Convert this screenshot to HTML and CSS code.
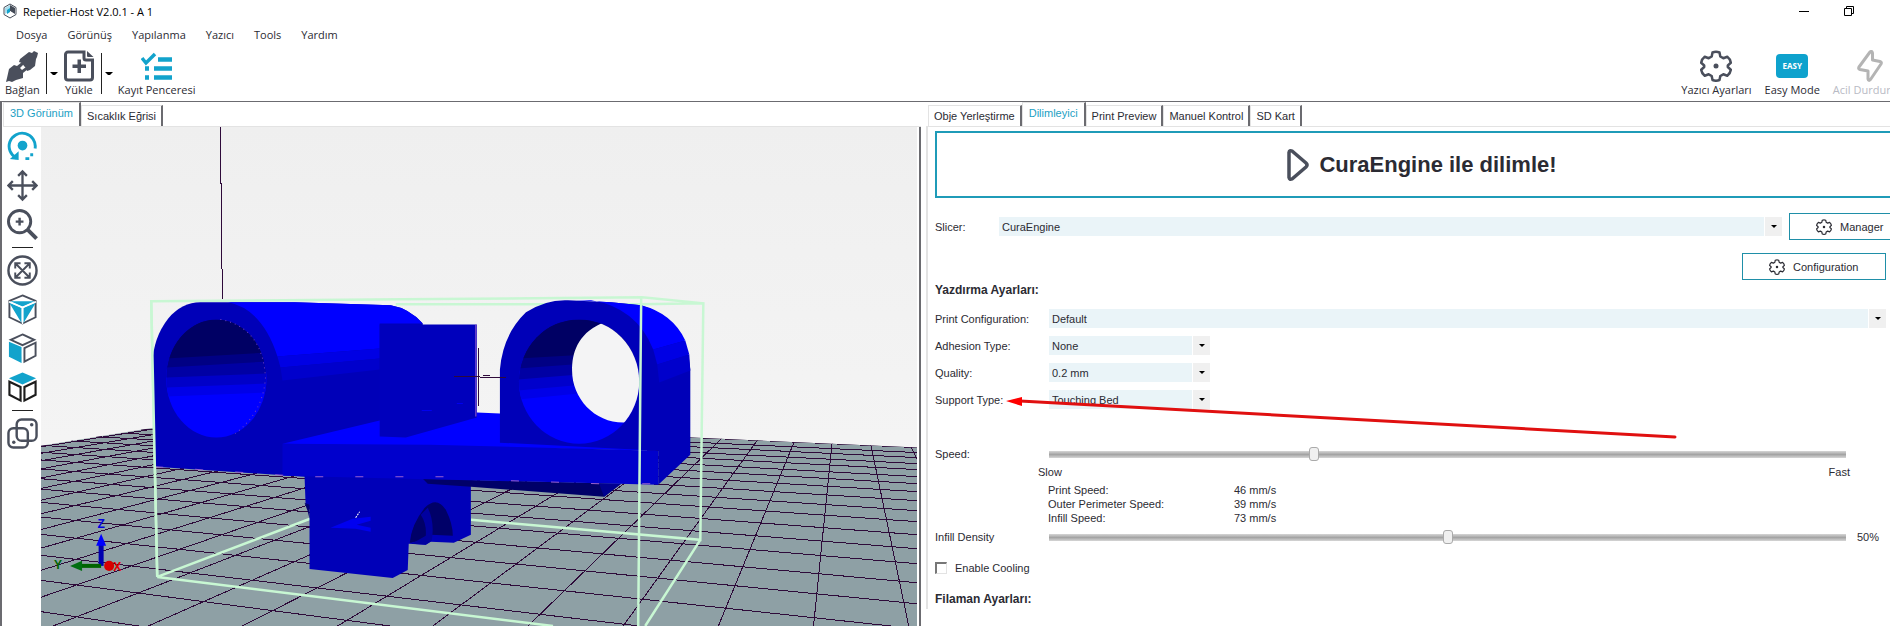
FILE: index.html
```
<!DOCTYPE html>
<html lang="tr">
<head>
  <meta charset="UTF-8" />
  <meta name="viewport" content="width=device-width, initial-scale=1.0"/>
  <title>Repetier-Host V2.0.1 - A 1</title>
  <link rel="stylesheet" href="styles.css">
</head>
<body>

  <svg class="defs" width="0" height="0" aria-hidden="true">
    <symbol id="gear" viewBox="0 0 32 32">
      <path d="M12.5 2.500q3.500-1.500 7 0l.8 4 3 1.700 4-1.400q3 2.200 3.500 6l-3 2.700v1.500l3 2.700q-.5 3.800-3.500 6l-4-1.400-3 1.700-.8 4q-3.500 1.500-7 0l-.8-4-3-1.700-4 1.400q-3-2.200-3.500-6l3-2.700v-1.500l-3-2.700q.5-3.800 3.500-6l4 1.400 3-1.700z" fill="none" stroke="currentColor" stroke-linejoin="round"/>
      <circle cx="16" cy="16" r="2.500" fill="currentColor"/>
    </symbol>
  </svg>

  <header class="titlebar">
    <svg class="logo" viewBox="0 0 16 16">
      <path d="M8 1l6 3.500v7L8 15l-6-3.500v-7z" fill="#fff" stroke="#444b57" stroke-width="1"/>
      <path d="M8 2v6l-5 3V5z" fill="#a8dcec"/>
      <path d="M8 2v6l5 3V5z" fill="#444b57"/>
      <path d="M8 8l4 3-4 2-4-2z" fill="#fff"/>
      <path d="M8 5v4l-3 2V7z" fill="#12a3cc"/>
    </svg>
    <span class="title">Repetier-Host V2.0.1 - A 1</span>
    <div class="window-buttons">
      <button aria-label="Minimize"><svg viewBox="0 0 10 10"><path d="M0 5.500h10" stroke="#000"/></svg></button>
      <button aria-label="Restore"><svg viewBox="0 0 10 10"><path d="M.5 2.500h7v7h-7zM2.500 2.500v-2h7v7h-2" fill="none" stroke="#000"/></svg></button>
    </div>
  </header>

  <nav class="menu">
    <a href="#">Dosya</a>
    <a href="#">Görünüş</a>
    <a href="#">Yapılanma</a>
    <a href="#">Yazıcı</a>
    <a href="#">Tools</a>
    <a href="#">Yardım</a>
  </nav>

  <div class="toolbar">
    <button class="tool">
      <svg viewBox="0 0 32 32">
        <g fill="#4a4f5c">
          <path d="M14 9l9-7 3 1 2-2 4 2-1 4-1 2-1 7-5 4-3 1-1-3-2-2-2-3-3-1z"/>
          <path d="M3 19l5-4 3 1 5-4 2 2-4 4 2 2 4-3 2 2-5 4v5l-7 2-4 2-3-1-3 1 1-4z"/>
        </g>
      </svg>
      Bağlan
    </button>
    <button class="drop" aria-label="Bağlan seçenekleri"></button>
    <button class="tool">
      <svg viewBox="0 0 32 32">
        <path d="M21 2H5a2.500 2.500 0 0 0-2.500 2.500v23A2.500 2.500 0 0 0 5 30h22a2.500 2.500 0 0 0 2.500-2.500V10h-6.500a2 2 0 0 1-2-2z" fill="none" stroke="#4a4f5c" stroke-width="3"/>
        <path d="M24 1l6.500 6H25a1 1 0 0 1-1-1zM14.500 9.500h3.500v5h5V18h-5v5h-3.500v-5h-5v-3.500h5z" fill="#4a4f5c"/>
      </svg>
      Yükle
    </button>
    <button class="drop" aria-label="Yükle seçenekleri"></button>
    <button class="tool">
      <svg viewBox="0 0 32 32">
        <path d="M1 8l4 5 9-9" fill="none" stroke="#12a3cc" stroke-width="3.500"/>
        <path d="M17 9.500h14M13 18.500h18M13 27.500h18M4 18.500h4M4 27.500h4" stroke="#12a3cc" stroke-width="4.500"/>
      </svg>
      Kayıt Penceresi
    </button>
    <div class="toolbar-right">
      <button class="tool">
        <svg class="gear-big" viewBox="0 0 32 32"><use href="#gear"/></svg>
        Yazıcı Ayarları
      </button>
      <button class="tool">
        <span class="easy">EASY</span>
        Easy Mode
      </button>
      <button class="tool" disabled>
        <svg viewBox="0 0 32 32">
          <path d="M16 2L5 17q-1 2 1 2.500l8 1.500v8q.5 2.500 2.500.5L27 14q1-2-1-2.500L18.500 10V3q-.5-2.500-2.500-1z" fill="none" stroke="#b4b4b4" stroke-width="3" stroke-linejoin="round"/>
        </svg>
        Acil Durdurma
      </button>
    </div>
  </div>

  <main class="workspace">

    <section class="left-pane">
      <div class="tabs">
        <button class="tab active">3D Görünüm</button>
        <button class="tab">Sıcaklık Eğrisi</button>
      </div>
      <div class="view">
        <div class="view-tools">
          <button aria-label="Rotate">
            <svg viewBox="0 0 32 32">
              <path d="M10 28A13.500 13.500 0 1 1 29 18" fill="none" stroke="#12a3cc" stroke-width="3"/>
              <circle cx="16" cy="15" r="5" fill="#12a3cc"/>
              <path d="M3 29l9 1V21zM19 27h4v3h-4zM24 23h3v3h-3z" fill="#12a3cc"/>
            </svg>
          </button>
          <button aria-label="Move">
            <svg viewBox="0 0 32 32"><path d="M16 1v30M1 16h30M11.500 6L16 1.500 20.500 6M11.500 26l4.500 4.500 4.500-4.500M6 11.500L1.500 16 6 20.500M26 11.500l4.500 4.500-4.500 4.500" fill="none" stroke="#4a4f5c" stroke-width="2.400"/></svg>
          </button>
          <button aria-label="Zoom">
            <svg viewBox="0 0 32 32"><circle cx="13" cy="13" r="11.500" fill="none" stroke="#4a4f5c" stroke-width="3"/><path d="M13 9v8M9 13h8" stroke="#4a4f5c" stroke-width="2.500"/><path d="M21.500 21.500l9 9" stroke="#4a4f5c" stroke-width="4"/></svg>
          </button>
          <hr>
          <button aria-label="Fit">
            <svg viewBox="0 0 32 32"><circle cx="16" cy="16" r="14.500" fill="none" stroke="#4a4f5c" stroke-width="2.500"/><path d="M9 9l14 14M23 9L9 23M8.500 14V8.500H14M18 8.500h5.500V14M23.500 18v5.500H18M14 23.500H8.500V18" fill="none" stroke="#4a4f5c" stroke-width="2"/></svg>
          </button>
          <button aria-label="Isometric view">
            <svg viewBox="0 0 32 32">
              <path d="M16 1.500L29.500 7v17L16 30.500 2.500 24V7z" fill="#fff" stroke="#4a4f5c" stroke-width="2"/>
              <path d="M3.500 7.500h25L16 13z" fill="#12a3cc"/>
              <path d="M2 8.500l13 6V30zM30 8.500l-13 6V30z" fill="#12a3cc"/>
              <path d="M16 13v18M2 8l14 6 14-6" fill="none" stroke="#fff" stroke-width="1.500"/>
            </svg>
          </button>
          <button aria-label="Front view">
            <svg viewBox="0 0 32 32">
              <path d="M16 1.500L28 7l-12 5.500L4 7z" fill="#fff" stroke="#4a4f5c" stroke-width="2"/>
              <path d="M2 9l13 5.500V31L2 24.500z" fill="#12a3cc"/>
              <path d="M29.500 10v13.500L18 29.500V15.500z" fill="#fff" stroke="#4a4f5c" stroke-width="2"/>
            </svg>
          </button>
          <button aria-label="Top view">
            <svg viewBox="0 0 32 32">
              <path d="M16 .5L30 6.500 16 13 2 6.500z" fill="#12a3cc"/>
              <path d="M2.500 10v13.500L14 29.500V15.500zM29.500 10v13.500L18 29.500V15.500z" fill="#fff" stroke="#1c1c1c" stroke-width="2.200"/>
            </svg>
          </button>
          <hr>
          <button aria-label="Parallel projection">
            <svg viewBox="0 0 32 32">
              <rect x="1.500" y="10.500" width="20" height="20" rx="5" fill="none" stroke="#4a4f5c" stroke-width="2.500"/>
              <rect x="10" y="1.500" width="20.500" height="22" rx="5" fill="none" stroke="#4a4f5c" stroke-width="2.500"/>
              <circle cx="25.500" cy="7" r="1.800" fill="#4a4f5c"/><circle cx="7" cy="25" r="1.800" fill="#4a4f5c"/>
            </svg>
          </button>
        </div>

        <svg class="scene" viewBox="41 128 876 498" preserveAspectRatio="xMinYMin slice">
          <defs>
            <clipPath id="floor"><path d="M41 446L223 417 917 448V626H41z"/></clipPath>
            <clipPath id="holeL"><ellipse cx="216" cy="379" rx="50" ry="59"/></clipPath>
            <clipPath id="holeR"><ellipse cx="578" cy="382" rx="60" ry="62"/></clipPath>
            <linearGradient id="sky" x1="0" y1="0" x2="0" y2="1">
              <stop offset="0" stop-color="#efefef"/><stop offset="1" stop-color="#f7f7f7"/>
            </linearGradient>
          </defs>
          <rect x="41" y="128" width="876" height="498" fill="url(#sky)"/>

          <!-- print bed -->
          <g clip-path="url(#floor)">
            <rect x="41" y="400" width="876" height="226" fill="#8ea0a5"/>
            <path class="grid" d="M-1950 320L917 448M-1950 320L917 453M-1950 320L917 458M-1950 320L917 464M-1950 320L917 470M-1950 320L917 477M-1950 320L917 484M-1950 320L917 492M-1950 320L917 501M-1950 320L917 511M-1950 320L917 522M-1950 320L917 535M-1950 320L917 549M-1950 320L917 564M-1950 320L917 583M-1950 320L917 604M-1950 320L917 629M-1950 320L917 659M-1950 320L917 695M-1950 320L917 740"/>
            <path class="grid" d="M-1087 626L843 320M-992 626L843 320M-897 626L843 320M-802 626L843 320M-707 626L843 320M-612 626L843 320M-517 626L843 320M-422 626L843 320M-327 626L843 320M-232 626L843 320M-137 626L843 320M-42 626L843 320M53 626L843 320M148 626L843 320M242 626L843 320M337 626L843 320M432 626L843 320M527 626L843 320M622 626L843 320M717 626L843 320M812 626L843 320M907 626L843 320M1002 626L843 320"/>
          </g>
          <path class="grid" d="M220 128l2 172"/>

          <!-- far edges of the bounding box -->
          <path class="bounds" d="M157 577L151 302 401 300 641 298 702 304 699 540 470 520M702 304L640 305 395 305M157 577L320 515M157 577L552 626M699 540L644 626"/>

          <!-- lower block -->
          <path d="M304 476H470V535L453 543 430 542 425 545 408 544 407 570 392 578 309 569V510L305 503z" fill="#0000b8"/>
          <path d="M304 503l5 2v14l-2-8z" fill="#000070"/>
          <path d="M409 543Q411 524 424 508 436 496 445 510 452 524 452 536L430 535Q432 515 425 511 432 530 425 540z" fill="#000068"/>
          <path d="M427 508Q434 522 431 541L425 545 411 544 425 536Q426 524 420 515z" fill="#0000a0"/>
          <path d="M410 543Q411 528 417 520 424 530 424 536z" fill="#000068"/>
          <path d="M330 528l22-9 18-2v4l-14 4 14 3v4l-15-3z" fill="#0000f0"/>
          <path d="M355 518l4-6" fill="none" stroke="#fff" stroke-dasharray="2 1"/>
          <path d="M422 479L620 484 603 497 470 487 427 484z" fill="#000068"/>
          <path d="M598 484h22l-17 13z" fill="#000090"/>

          <!-- left tube -->
          <path d="M155 467L152 365Q153 338 168 319 182 303 200 303L294 303 390 306Q408 309 422 324V450L305 477z" fill="#0000b8"/>
          <path d="M200 303L294 303 390 306Q408 309 422 324H379V349L277 357Q262 310 228 303z" fill="#0000ff"/>
          <path d="M277 357L379 349V359L280 368z" fill="#0000e4"/>
          <path d="M280 368L379 359V370L282 381z" fill="#0000cc"/>
          <g clip-path="url(#holeL)">
            <path d="M166 320h101v120H166z" fill="#0000ff"/>
            <path d="M166 320h101v73L166 397z" fill="#0000e8"/>
            <path d="M166 320h101v64L166 388z" fill="#0000c8"/>
            <path d="M166 320h101v54L166 378z" fill="#0000a4"/>
            <path d="M166 320h101v42L166 368z" fill="#000084"/>
            <path d="M166 320h101v33L166 359z" fill="#000064"/>
          </g>
          <path d="M220 320Q262 328 265 378 263 412 235 434" fill="none" stroke="#7040c0" stroke-dasharray="1 4"/>

          <!-- plate -->
          <path d="M282 444L379 421 476 413 499 414 657 451z" fill="#0000ff"/>
          <path d="M282 444L430 445 657 451V485L282 476z" fill="#0000cc"/>
          <path d="M379 325H476V418L405 438 379 437z" fill="#0000bc"/>
          <path d="M421 411h10M456 404h6" stroke="#0000f0"/>
          <path class="seam" d="M475 325v92"/>

          <!-- right tube -->
          <path d="M499 443V370Q502 335 525 313 545 300 567 301L610 303 640 306Q686 320 689 370V455L657 485V451L580 447z" fill="#0000b8"/>
          <path d="M575 301L610 303 640 306Q671 314 684 341L652 350Q635 308 590 301z" fill="#0000ff"/>
          <path d="M652 350L684 341 688 355 656 365z" fill="#0000e4"/>
          <path d="M656 365L688 355 689 371 658 383z" fill="#0000cc"/>
          <g clip-path="url(#holeR)">
            <path d="M517 320h122v125H517z" fill="#0000ff"/>
            <path d="M517 320h122v68L517 400z" fill="#0000e8"/>
            <path d="M517 320h122v60L517 391z" fill="#0000cc"/>
            <path d="M517 320h122v50L517 380z" fill="#0000a4"/>
            <path d="M517 320h122v40L517 369z" fill="#000084"/>
            <path d="M517 320h122v32L517 359z" fill="#000064"/>
            <path d="M600 324C576 335 571 354 571 371 571 399 594 424 624 423H645V324z" fill="#f4f4f5"/>
          </g>

          <path class="grid" d="M478 349V406M453 377L505 378M482 376h7"/>
          <path class="seam" d="M155 467L305 477H465M510 481l90 3M641 484h15" stroke-dasharray="8 32"/>
          <path class="bounds" d="M640 298L639 400 637 626M151 302L157 577"/>

          <!-- axis marker -->
          <path d="M101 542v24" stroke="#0000b0" stroke-width="5"/>
          <path d="M101 534l5 12H96z" fill="#0000ff"/>
          <path d="M80 566h21" stroke="#006400" stroke-width="4"/>
          <path d="M70 566l12-5v10z" fill="#006e10"/>
          <circle cx="109" cy="566" r="5" fill="#d80000"/>
          <text class="axis" x="101" y="528" fill="#0000e0">Z</text>
          <text class="axis" x="58" y="569" fill="#006400">Y</text>
          <text class="axis" x="117" y="571" fill="#e00000">X</text>
        </svg>
      </div>
    </section>

    <section class="right-pane">
      <div class="tabs">
        <button class="tab">Obje Yerleştirme</button>
        <button class="tab active">Dilimleyici</button>
        <button class="tab">Print Preview</button>
        <button class="tab">Manuel Kontrol</button>
        <button class="tab">SD Kart</button>
      </div>

      <form class="slicer">
        <button type="button" class="slice-button">
          <svg viewBox="0 0 24 34"><path d="M3 4.500v25q.5 2.500 3 1.500L20 19q2-2 0-4L6 3Q3.500 2 3 4.500z" fill="none" stroke="#4a4f5c" stroke-width="3.500"/></svg>
          CuraEngine ile dilimle!
        </button>

        <div class="row slicer-row">
          <label for="slicer">Slicer:</label>
          <span class="combo"><select id="slicer"><option>CuraEngine</option></select></span>
          <button type="button" class="outline"><svg viewBox="0 0 32 32"><use href="#gear"/></svg>Manager</button>
        </div>
        <div class="row config-row">
          <button type="button" class="outline"><svg viewBox="0 0 32 32"><use href="#gear"/></svg>Configuration</button>
        </div>

        <h2>Yazdırma Ayarları:</h2>
        <div class="fields">
          <label for="config">Print Configuration:</label>
          <span class="combo"><select id="config"><option>Default</option></select></span>
          <label for="adhesion">Adhesion Type:</label>
          <span class="combo short"><select id="adhesion"><option>None</option></select></span>
          <label for="quality">Quality:</label>
          <span class="combo short"><select id="quality"><option>0.2 mm</option></select></span>
          <label for="support">Support Type:</label>
          <span class="combo short"><select id="support"><option>Touching Bed</option></select></span>
        </div>

        <div class="slider-row">
          <label for="speed">Speed:</label>
          <input type="range" id="speed" min="0" max="100" value="33">
        </div>
        <div class="scale"><span>Slow</span><span>Fast</span></div>
        <dl class="speeds">
          <dt>Print Speed:</dt><dd>46 mm/s</dd>
          <dt>Outer Perimeter Speed:</dt><dd>39 mm/s</dd>
          <dt>Infill Speed:</dt><dd>73 mm/s</dd>
        </dl>
        <div class="slider-row">
          <label for="infill">Infill Density</label>
          <input type="range" id="infill" min="0" max="100" value="50">
          <output for="infill">50%</output>
        </div>

        <div class="check">
          <input type="checkbox" id="cooling">
          <label for="cooling">Enable Cooling</label>
        </div>
        <h2>Filaman Ayarları:</h2>
      </form>

      <svg class="pointer" width="680" height="50" viewBox="0 0 680 50">
        <path d="M14 11L669 47" stroke="#e01010" stroke-width="3" stroke-linecap="round"/>
        <path d="M0 11L16 7v9z" fill="#f00"/>
      </svg>
    </section>

  </main>

</body>
</html>
```
FILE: styles.css
```
* {
  box-sizing: border-box;
}

body {
  margin: 0;
  height: 100vh;
  display: flex;
  flex-direction: column;
  overflow: hidden;
  background: #fff;
  color: #2b2b33;
  font-family: "Open Sans", "Noto Sans", sans-serif;
  font-size: 11px;
}

button {
  padding: 0;
  border: none;
  background: none;
  color: inherit;
  font: inherit;
  white-space: nowrap;
  cursor: pointer;
}

svg {
  display: block;
}

.defs {
  position: absolute;
}

/* title bar and menu */
.titlebar {
  display: flex;
  align-items: center;
  height: 22px;
  padding-left: 2px;
  color: #000;
}

.logo {
  width: 16px;
  height: 16px;
  margin-right: 5px;
}

.window-buttons {
  display: flex;
  margin-left: auto;
  margin-right: 19px;
}

.window-buttons button {
  width: 45px;
  height: 20px;
}

.window-buttons svg {
  width: 10px;
  height: 10px;
  margin: auto;
}

.menu {
  display: flex;
  align-items: center;
  gap: 20px;
  height: 24px;
  padding-left: 16px;
}

.menu a {
  color: inherit;
  text-decoration: none;
}

/* toolbar */
.toolbar {
  display: flex;
  height: 56px;
  padding: 4px 0 0 5px;
  border-bottom: 1px solid #6b6b70;
}

.tool {
  display: flex;
  flex-direction: column;
  align-items: center;
  line-height: 16px;
}

.tool svg {
  width: 32px;
  height: 32px;
}

.tool:disabled {
  color: #b8bac4;
}

.drop {
  width: 12px;
  height: 41px;
  margin: 3px 5px 0 6px;
  border-left: 1px solid #222;
}

.drop::after,
.combo::before {
  content: "";
  display: block;
  border: 3px solid transparent;
  border-top-color: #000;
  border-bottom: none;
}

.drop::after {
  margin-left: 3px;
}

.toolbar-right {
  display: flex;
  gap: 13px;
  margin-left: auto;
  margin-right: -17px;
}

.gear-big {
  color: #4a4f5c;
  stroke-width: 2.5;
}

.easy {
  width: 32px;
  height: 24px;
  margin: 4px 0;
  border-radius: 4px;
  background: #0ea2cd;
  color: #fff;
  font-size: 8px;
  font-weight: bold;
  line-height: 24px;
  text-align: center;
}

/* panes */
.workspace {
  display: flex;
  flex: 1;
  min-height: 0;
  font-family: "Liberation Sans", Arial, sans-serif;
  font-size: 11px;
}

.left-pane {
  display: flex;
  flex-direction: column;
  width: 921px;
  border-left: 2px solid #6b6b70;
  padding-left: 1px;
}

.tabs {
  display: flex;
  align-items: flex-end;
  height: 25px;
  border-bottom: 1px solid #e3e3e3;
}

.tab {
  height: 21px;
  padding: 0 5px;
  border-top: 1px solid #e3e3e3;
  border-left: 1px solid #e3e3e3;
  border-right: 2px solid #6b6b70;
}

.tab.active {
  height: 24px;
  padding: 0 6px 4px;
  color: #1c9fc4;
}

.view {
  display: flex;
  flex: 1;
  min-height: 0;
  border-right: 2px solid #6b6b70;
  padding-right: 2px;
}

.view-tools {
  display: flex;
  flex-direction: column;
  align-items: center;
  gap: 6px;
  width: 38px;
  padding: 3px 3px 0;
}

.view-tools svg {
  width: 31px;
  height: 33px;
}

.view-tools hr {
  width: 21px;
  margin: 0;
  border: none;
  border-top: 1px solid #222;
}

.scene {
  flex: 1;
  min-width: 0;
  height: 100%;
}

.grid {
  fill: none;
  stroke: #2e0a3a;
  shape-rendering: crispEdges;
}

.bounds {
  fill: none;
  stroke: #c8f7d3;
  stroke-width: 2.5;
}

.seam {
  fill: none;
  stroke: #9860d0;
}

.axis {
  font-size: 12px;
  font-weight: bold;
  text-anchor: middle;
}

.right-pane {
  position: relative;
  flex: 1;
  min-width: 0;
  padding-left: 5px;
  overflow: hidden;
}

.right-pane .tabs {
  padding-left: 2px;
}

/* slicer form */
.slicer {
  border-left: 2px solid #e3e3e3;
  padding: 4px 4px 0 7px;
}

.slice-button {
  display: flex;
  align-items: center;
  justify-content: center;
  gap: 9px;
  width: calc(100% + 22px);
  height: 67px;
  border: 2px solid #1f9bb8;
  font-size: 22px;
  font-weight: bold;
}

.slice-button svg {
  width: 24px;
  height: 34px;
}

.row {
  display: flex;
  align-items: center;
}

.slicer-row {
  margin: 15px -47px 13px 0;
}

.slicer-row label {
  width: 64px;
}

.slicer-row .combo {
  flex: 1;
  margin-right: 7px;
}

.config-row {
  justify-content: flex-end;
}

.outline {
  display: flex;
  align-items: center;
  gap: 8px;
  width: 144px;
  height: 27px;
  padding-left: 26px;
  border: 1px solid #1f8fa8;
}

.outline svg {
  width: 16px;
  height: 16px;
  stroke-width: 2.5;
}

h2 {
  margin: 0;
  font-size: 12px;
  line-height: 20px;
}

.fields {
  display: grid;
  grid-template-columns: 114px 1fr;
  row-gap: 8px;
  align-items: center;
  margin-top: 9px;
}

.combo {
  position: relative;
  display: block;
  height: 19px;
}

.combo.short {
  width: 161px;
}

.combo select {
  width: 100%;
  height: 19px;
  padding: 0 20px 0 3px;
  border: none;
  border-radius: 0;
  appearance: none;
  background: #eaf4f8;
  color: inherit;
  font: inherit;
}

.combo::after {
  content: "";
  position: absolute;
  top: 0;
  right: 0;
  width: 17px;
  height: 19px;
  border-left: 1px solid #fff;
  background: #f0f0f0;
  pointer-events: none;
}

.combo::before {
  position: absolute;
  top: 8px;
  right: 5px;
  z-index: 1;
  pointer-events: none;
}

.slider-row {
  display: flex;
  align-items: center;
  height: 16px;
  margin-top: 37px;
  padding-right: 40px;
}

.slider-row label {
  width: 114px;
}

.slider-row input {
  flex: 1;
  height: 14px;
  margin: 0;
  appearance: none;
  background: linear-gradient(#d6d6d6, #a4a4a4, #d6d6d6) center / 100% 7px no-repeat;
}

.slider-row input::-webkit-slider-thumb {
  appearance: none;
  width: 10px;
  height: 14px;
  border: 1px solid #aaa;
  border-radius: 3px;
  background: #f0f0f0;
}

.slider-row output {
  width: 29px;
  margin-right: -40px;
  margin-left: 11px;
}

.scale {
  display: flex;
  justify-content: space-between;
  padding: 3px 36px 0 103px;
  line-height: 14px;
}

.speeds {
  display: grid;
  grid-template-columns: 186px 1fr;
  margin: 4px 0 0 113px;
  line-height: 14px;
}

.speeds dd {
  margin: 0;
}

.speeds + .slider-row {
  margin-top: 4px;
}

.check {
  display: flex;
  align-items: center;
  gap: 8px;
  margin: 17px 0 15px;
}

.check input {
  width: 12px;
  height: 12px;
  margin: 0;
  appearance: none;
  border: 1px solid #e3e3e3;
  border-top: 2px solid #777;
  border-left: 2px solid #777;
}

.pointer {
  position: absolute;
  top: 288px;
  left: 85px;
  pointer-events: none;
}
```
